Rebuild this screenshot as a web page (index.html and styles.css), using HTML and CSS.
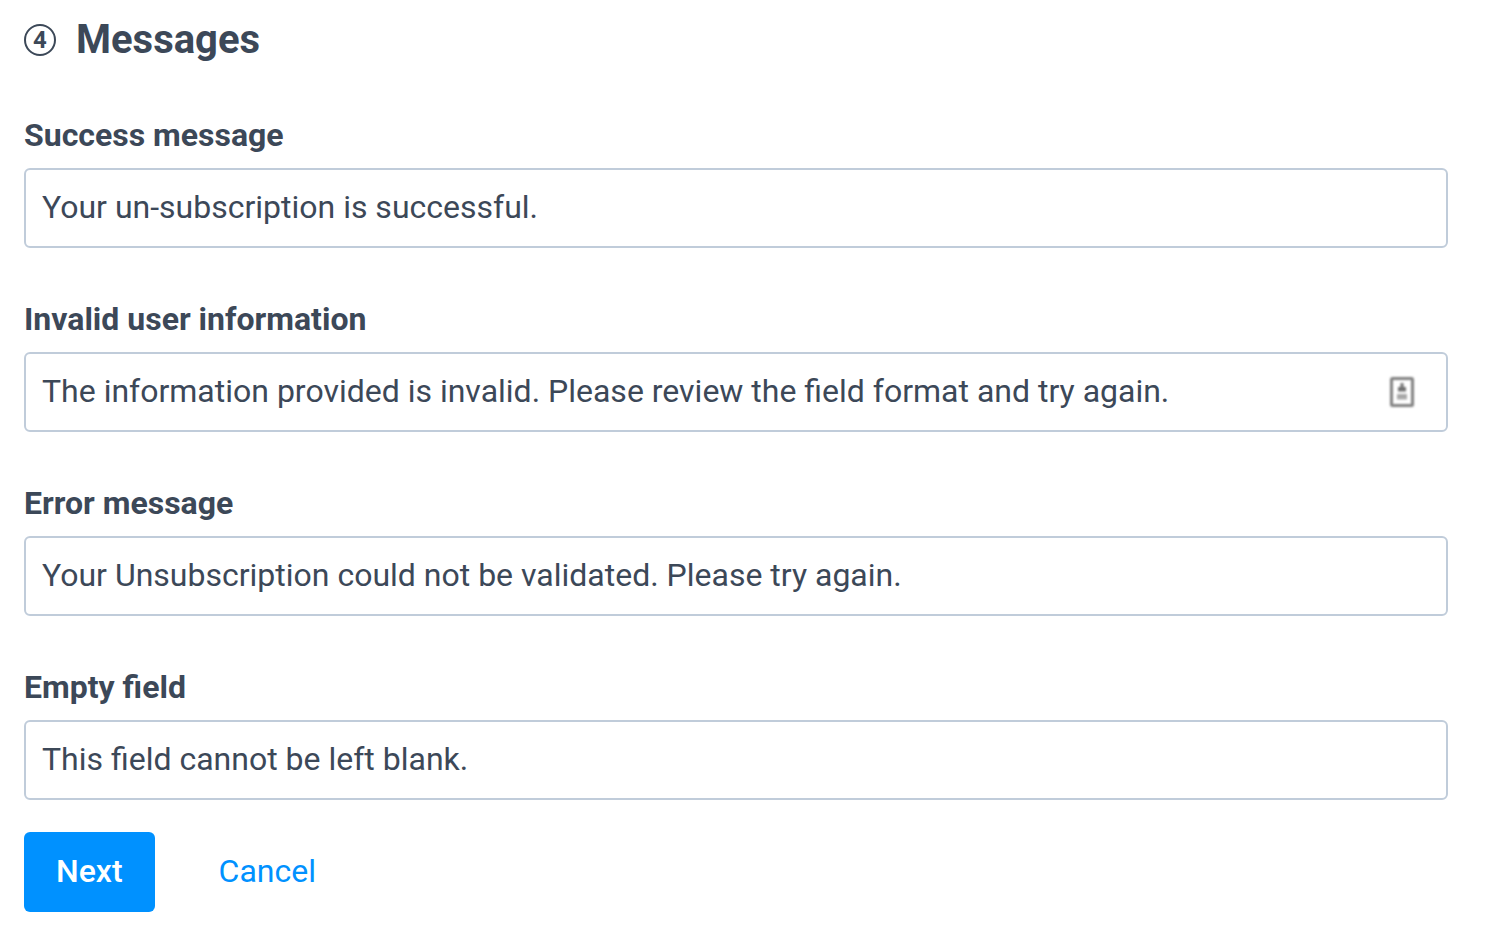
FILE: index.html
```html
<!DOCTYPE html>
<html lang="en">
<head>
  <meta charset="UTF-8" />
  <meta name="viewport" content="width=device-width, initial-scale=1.0" />
  <title>Messages</title>
  <link rel="stylesheet" href="styles.css">
</head>
<body>
  <form class="messages">
    <h2 class="step-title"><span class="step-number">4</span>Messages</h2>

    <div class="field">
      <label for="successMessage">Success message</label>
      <input type="text" id="successMessage" value="Your un-subscription is successful." />
    </div>

    <div class="field">
      <label for="invalidInfo">Invalid user information</label>
      <div class="input-wrap">
        <input type="text" id="invalidInfo" value="The information provided is invalid. Please review the field format and try again." />
        <svg class="autofill-icon" viewBox="0 0 28 34" aria-hidden="true">
          <rect x="3.5" y="3.5" width="21" height="27" rx="1" fill="#fff" stroke="#808080" stroke-width="3" />
          <path d="M12.5 8h3v4h2.5v4.500h-8v-4.500h2.500z" fill="#707070" />
          <path d="M9 19h10v5.500h-10z" fill="#a8a8a8" />
        </svg>
      </div>
    </div>

    <div class="field">
      <label for="errorMessage">Error message</label>
      <input type="text" id="errorMessage" value="Your Unsubscription could not be validated. Please try again." />
    </div>

    <div class="field">
      <label for="emptyField">Empty field</label>
      <input type="text" id="emptyField" value="This field cannot be left blank." />
    </div>

    <div class="actions">
      <button type="submit" class="btn-next">Next</button>
      <a href="#" class="btn-cancel">Cancel</a>
    </div>
  </form>
</body>
</html>
```

FILE: styles.css
```css
:root {
  --text: #3c4858;
  --border: #c0ccda;
  --blue: #0091ff;
}

* {
  box-sizing: border-box;
}

body {
  margin: 0;
  background-color: #fff;
  color: var(--text);
  font-family: Roboto, sans-serif;
  font-size: 32px;
  line-height: 40px;
}

.messages {
  padding: 16px 40px 22px 24px;
}

.step-title {
  display: flex;
  align-items: center;
  gap: 20px;
  margin: 0 0 48px;
  font-size: 40px;
  line-height: 48px;
}

.step-number {
  display: flex;
  align-items: center;
  justify-content: center;
  width: 32px;
  height: 32px;
  border: 2px solid var(--text);
  border-radius: 50%;
  font-size: 24px;
  line-height: 28px;
}

.field {
  margin-bottom: 48px;
}

.field label {
  display: block;
  padding: 3px 0 13px;
  font-weight: 700;
}

.field input {
  display: block;
  width: 100%;
  height: 80px;
  padding: 0 16px 2px;
  border: 2px solid var(--border);
  border-radius: 6px;
  background-color: #fff;
  color: var(--text);
  font: inherit;
}

.input-wrap {
  position: relative;
}

.input-wrap input {
  padding-right: 72px;
}

.autofill-icon {
  position: absolute;
  top: 23px;
  right: 32px;
  width: 28px;
  height: 34px;
  filter: blur(1px);
}

.actions {
  display: flex;
  align-items: center;
  gap: 64px;
  margin-top: -16px;
}

.btn-next {
  height: 80px;
  padding: 0 32px 2px;
  border: none;
  border-radius: 6px;
  background-color: var(--blue);
  color: #fff;
  font: inherit;
  font-weight: 500;
}

.btn-cancel {
  padding-bottom: 2px;
  color: var(--blue);
  text-decoration: none;
}
```
